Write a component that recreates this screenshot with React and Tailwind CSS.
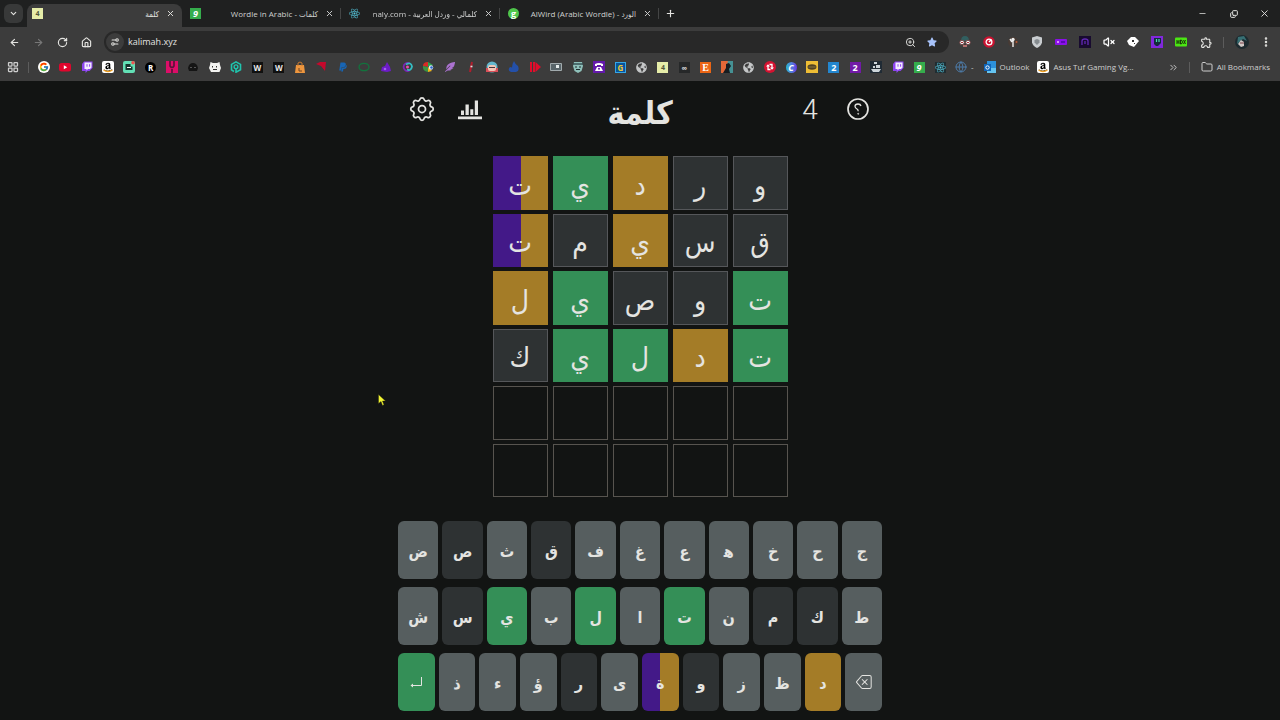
import { clsx } from "clsx";
import { BsBackspace } from "react-icons/bs";
import { FcGoogle } from "react-icons/fc";
import { FaAmazon, FaFeatherAlt, FaGlobeAmericas, FaPaypal, FaReact, FaStar } from "react-icons/fa";
import { MdOutlineExtension } from "react-icons/md";
import {
  ArrowLeft,
  ArrowRight,
  ChevronDown,
  ChevronsRight,
  Copy,
  EllipsisVertical,
  Folder,
  Globe,
  House,
  LayoutGrid,
  Minus,
  Plus,
  RotateCw,
  Settings2,
  VolumeX,
  X,
  ZoomIn,
} from "lucide-react";

const tileColors = {
  hit: "border-[#348f57] bg-[#348f57]",
  near: "border-[#a47c27] bg-[#a47c27]",
  miss: "border-[#55575a] bg-[#2e3233]",
  split: "border-transparent bg-[linear-gradient(90deg,#431988_50%,#a47c27_50%)] bg-origin-border",
  empty: "border-[#57544f]",
};

const keyColors = {
  hit: "bg-[#348f57]",
  near: "bg-[#a47c27]",
  miss: "bg-[#2e3233]",
  split: "bg-[linear-gradient(90deg,#431988_50%,#a47c27_50%)]",
  idle: "bg-[#565e5f]",
};

const guesses = [
  { word: "ورديت", marks: ["miss", "miss", "near", "hit", "split"] },
  { word: "قسيمت", marks: ["miss", "miss", "near", "miss", "split"] },
  { word: "توصيل", marks: ["hit", "miss", "miss", "hit", "near"] },
  { word: "تدليك", marks: ["hit", "near", "hit", "hit", "miss"] },
  { word: "", marks: ["empty", "empty", "empty", "empty", "empty"] },
  { word: "", marks: ["empty", "empty", "empty", "empty", "empty"] },
];

const keyStates = {
  "ق": "miss",
  "ص": "miss",
  "ك": "miss",
  "م": "miss",
  "س": "miss",
  "و": "miss",
  "ر": "miss",
  "ت": "hit",
  "ل": "hit",
  "ي": "hit",
  "د": "near",
  "ة": "split",
};

const keyRows = ["جحخهعغفقثصض", "طكمنتالبيسش"];
const lastRow = "دظزوةىرؤءذ";

const tabs = [
  { icon: "four", title: "كلمة", active: true },
  { icon: "nine", title: "كلمات - Wordle in Arabic" },
  { icon: "react", title: "كلمالي - وردل العربية - naly.com", faded: true },
  { icon: "green", title: "الورد - AlWird (Arabic Wordle)" },
];

// small square with one character in it
const Letter = ({ children, className }) => (
  <span className={clsx("flex size-[11px] shrink-0 items-center justify-center leading-[11px] font-bold", className)}>
    {children}
  </span>
);

const Svg = ({ children }) => (
  <svg viewBox="0 0 12 12" className="size-3" aria-hidden="true">
    {children}
  </svg>
);

const TwitchIcon = () => (
  <Svg>
    <path d="M1 3 3 .5h8.500V7L8.500 10H6.500L4.500 12v-2H1z" fill="#8d44f0" />
    <path d="M3.500 1.500h7v5L9 8H7L5.500 9.500V8h-2z" fill="#f4edff" />
    <path d="M6 3.200v2.500M8.600 3.200v2.500" stroke="#8d44f0" />
  </Svg>
);

const AmazonIcon = () => (
  <span className="relative flex size-3 items-center justify-center rounded-xs bg-white text-black">
    <FaAmazon className="size-[10px]" />
    <svg viewBox="0 0 12 12" className="absolute inset-0">
      <path d="M1.500 9Q6 12 10.500 9" fill="none" stroke="#f0a020" strokeWidth="1.300" />
    </svg>
  </span>
);

const GlobeIcon = () => <FaGlobeAmericas className="size-[11px] text-[#c4c6c7]" />;

const siteIcons = {
  four: <Letter className="bg-[#e6eda9] text-[7px] text-[#53573a]">4</Letter>,
  nine: <Letter className="bg-[#35ad4c] text-[9px] text-white italic">9</Letter>,
  react: <FaReact className="size-[11px] shrink-0 text-[#55c6dc]" />,
  green: <Letter className="rounded-full bg-[#4fc64b] text-[9px] text-white">g</Letter>,
};

const bookmarks = [
  ["Google", <span className="rounded-full bg-white p-px"><FcGoogle className="size-[10px]" /></span>],
  ["YouTube", <Svg><rect y="2" width="12" height="8.500" rx="2.500" fill="#e0062d" /><path d="m4.800 4.200 3.400 2-3.400 2z" fill="#fff" /></Svg>],
  ["Twitch", <TwitchIcon />],
  ["Amazon", <AmazonIcon />],
  ["Bot", <Svg><rect width="12" height="12" rx="2" fill="#62e0b5" /><path d="M2.500 3h5v2.500h2V9h-7z" fill="#17362f" /><path d="M4 6.500h4" stroke="#fff" /><circle cx="10" cy="1.800" r="1.800" fill="#ef5350" /></Svg>],
  ["R", <Letter className="rounded-full bg-black text-[8px] text-white">R</Letter>],
  ["U", <Svg><path d="M0 0h12v12H0z" fill="#dc0e68" /><path d="M4 0v5q2 3 4 0V0M6 8v4" fill="none" stroke="#541438" strokeWidth="1.600" /></Svg>],
  ["Hat", <Svg><path d="M1 7Q2 2 6 2t5 5l-1 3H2z" fill="#151515" /><path d="M3 6.500h2m2 0h2" stroke="#555" /></Svg>],
  ["Ghost", <Svg><path d="m1.500 1 2.500 1h4l2.500-1L11 4l1 3-1.500 4H2L0 7l1-3z" fill="#f3f3f0" /><path d="M3.500 5v1.500M7.500 5v1.500M4 8.500h4" stroke="#333" /></Svg>],
  ["Hex", <Svg><path d="M4 10.500 1.500 8.800V3.400L6 .900l4.500 2.500v5.400L6 11.200V8" fill="none" stroke="#20c4ad" strokeWidth="1.600" /><circle cx="6" cy="5.800" r="1.900" fill="none" stroke="#20c4ad" strokeWidth="1.400" /></Svg>],
  ["W one", <Letter className="bg-[#101010] text-[8px] text-[#e8e8e8]">W</Letter>],
  ["W two", <Letter className="bg-[#101010] text-[8px] text-[#e8e8e8]">W</Letter>],
  ["Bag", <Svg><path d="M2 4h8l1 8H1z" fill="#ee963e" /><path d="M4 5V2q2-2 4 0v3" fill="none" stroke="#c67831" /><path d="M5 7v3h3" stroke="#6d4425" fill="none" /></Svg>],
  ["Wing", <Svg><path d="M1 3 5 1h6l-1 9-4-5z" fill="#c5082c" /></Svg>],
  ["PayPal", <FaPaypal className="size-[10px] text-[#1765b5]" />],
  ["Ring", <Svg><ellipse cx="6" cy="6" rx="5" ry="3.700" fill="none" stroke="#12733d" strokeWidth="1.300" /></Svg>],
  ["Bell", <Svg><path d="m7 1 3 5 1 4-4 1-6-1 1-4 3-1z" fill="#6c1cc7" /><circle cx="5" cy="8" r="1.300" fill="#a35cf4" /></Svg>],
  ["Orbit", <Svg><path d="M8.500 2.500a4 4 0 1 0 0 7" fill="none" stroke="#7d25b8" strokeWidth="1.800" /><path d="M5 3.500q5-3 6 2-1 5-5 3" fill="none" stroke="#35bdc4" strokeWidth="1.800" /><circle cx="6.500" cy="6" r="1.500" fill="#e94cae" /></Svg>],
  ["Wheel", <Svg><path d="M6 6 1 5q0-4 5-4z" fill="#d92a25" /><path d="M6 6V1l5 3z" fill="#2ba34b" /><path d="M6 6 1 5q-1 5 5 6z" fill="#3c9544" /><path d="M6 6v5l4-1z" fill="#edb51c" /><circle cx="9" cy="6.500" r="2.200" fill="#e7eefb" /><circle cx="9.500" cy="6.500" r="1.300" fill="#2961c7" /></Svg>],
  ["Feather", <FaFeatherAlt className="size-[10px] text-[#ab72d0]" />],
  ["Pen", <Svg><path d="M7 1 5 11" stroke="#b01d2d" strokeWidth="2" /><path d="M5.500 5.500h2" stroke="#ddd" strokeWidth="1.600" /></Svg>],
  ["Avatar", <Svg><circle cx="6" cy="6" r="5.500" fill="#62b6cc" /><path d="M0 7h12v4H0z" fill="#d84e58" /><rect x="2" y="4" width="8" height="6" rx="2" fill="#f0c5b5" /><path d="M3 6.500h6" stroke="#45343b" /></Svg>],
  ["Flame", <Svg><path d="M6 0q1 3 4 5 2 5-2 6H3Q-1 9 2 6l2 .500Q4 3 6 0" fill="#2450a9" /></Svg>],
  ["Play", <Svg><path d="M1 1h2v10H1zM4 1h2v10H4zM6.500 1 12 6l-5.500 5z" fill="#e10d2b" /></Svg>],
  ["Ticket", <Svg><path d="M.5 2.500h11v7H.500z" fill="#59656a" stroke="#a1aaad" /><path d="M6 4h3v3H6z" fill="#e7eded" /></Svg>],
  ["Mask", <Svg><path d="M2 1h8l1 4-1.500 5L6 12l-3.500-2L1 5z" fill="#8fc0ba" /><path d="M1 3h10" stroke="#283f43" strokeWidth="1.300" /><path d="M3 6h2m2 0h2M4 8.500h4" stroke="#1e2e30" /></Svg>],
  ["Phone", <Svg><path d="M0 0h12v12H0z" fill="#6319ab" /><path d="M2 5V3q4-2 8 0v2H8V4H4v1zM4 6h4l2 4H2z" fill="#fff" /><circle cx="6" cy="7.700" r="1" fill="#6319ab" /></Svg>],
  ["G", <Letter className="border border-[#35a6e7] bg-[#08549a] text-[8px] text-[#f1c934]">G</Letter>],
  ["Site", <GlobeIcon />],
  ["كلمة", siteIcons.four],
  ["Infinity", <Letter className="bg-[#262829] text-[8px] text-[#d3d3d3]">∞</Letter>],
  ["Etsy", <Letter className="bg-[#eb6514] font-['Liberation_Serif',serif] text-[10px] text-white">E</Letter>],
  ["Painting", <Svg><path d="M0 0h12v12H0z" fill="#459194" /><path d="M0 0h7L4 12H0z" fill="#e36838" /><path d="m5 3 3-1 2 3-2 3 1 4H2l3-5z" fill="#171c20" /></Svg>],
  ["Website", <GlobeIcon />],
  ["Sync", <Svg><circle cx="6" cy="6" r="6" fill="#d51231" /><path d="M6.500 8.500H4v-4M5.500 3.500H8v4" fill="none" stroke="#fff" strokeWidth="1.300" /><path d="m2 5.500 2-2.300 2 2.300zM6 6.500l2 2.300 2-2.300z" fill="#fff" /></Svg>],
  ["Canva", <Letter className="rounded-full bg-linear-to-r from-[#18b7cf] to-[#652de6] text-[9px] text-white italic">C</Letter>],
  ["Oval", <Svg><path d="M0 0h12v12H0z" fill="#eebd35" /><ellipse cx="6" cy="6" rx="4.500" ry="2.700" fill="#514222" /><path d="M2.500 6h7" stroke="#8b753c" /></Svg>],
  ["Two blue", <Letter className="bg-[#2386cf] text-[9px] text-white">2</Letter>],
  ["Two purple", <Letter className="bg-[#721aa7] text-[9px] text-white">2</Letter>],
  ["Ship", <Svg><path d="M0 0h12v12H0z" fill="#202b35" /><path d="M1 8h10L9 11H3zM6 4h4v3H6zM3 5h2v2H3zM4 1h3v2H4z" fill="#cdd5da" /></Svg>],
  ["Twitch two", <TwitchIcon />],
  ["كلمات", siteIcons.nine],
  ["React", <span className="bg-[#202d32]">{siteIcons.react}</span>],
];

const extensions = [
  ["Glasses", <Svg><path d="M2 5q0-5 4-5t4 5z" fill="#315f60" /><circle cx="3" cy="6.500" r="2.300" fill="#eee" stroke="#6c4042" /><circle cx="9" cy="6.500" r="2.300" fill="#eee" stroke="#6c4042" /><path d="M2 6.500h2m4 0h2" stroke="#a92c32" /><path d="M4 10h4" stroke="#db7f7d" strokeWidth="1.500" /></Svg>],
  ["Blocker", <Svg><circle cx="6" cy="6" r="5.800" fill="#cc1230" /><circle cx="6" cy="6" r="2.900" fill="none" stroke="#fff" strokeWidth="1.300" /><path d="m6 6 2.500-2.500" stroke="#fff" strokeWidth="1.500" /></Svg>],
  ["Key", <Svg><circle cx="6" cy="6" r="5" fill="#473b35" /><circle cx="6" cy="3.500" r="1.700" fill="#eee" /><path d="M6 4v7M3 3l2 3" stroke="#eee" strokeWidth="1.400" /><circle cx="9.500" cy="6" r="1" fill="#b85a35" /></Svg>],
  ["Shield", <Svg><path d="m6 0 5 1.500v5Q10 10 6 12 2 10 1 6.500v-5z" fill="#c9cdd0" /><path d="m6 3 2.500 1v2.500L6 9 3.500 6.500V4z" fill="#858b8f" /></Svg>],
  ["Toggle", <Svg><rect y="3" width="12" height="6" rx="1" fill="#8a10e8" /><circle cx="3" cy="6" r="1" fill="#efb9ff" /><path d="M6 6h4" stroke="#5b06b6" strokeWidth="2" /></Svg>],
  ["Arch", <Svg><path d="M0 0h12v12H0z" fill="#180b2f" /><path d="M3 9V5q0-2 3-2t3 2v4M6 5v3" fill="none" stroke="#6229b5" strokeWidth="1.300" /></Svg>],
  ["Mute", <VolumeX className="size-3 text-white" strokeWidth={2.5} />],
  ["Cube", <Svg><path d="M0 5 4 1l4 0 4 4-5 6-5-2z" fill="#fff" /><path d="M5 4h2v2H5zM7 7h1v1H7z" fill="#333" /></Svg>],
  ["Stream", <Svg><path d="M0 0h12v12H0z" fill="#8128dc" /><path d="M3 2h7v5L7 10H5L3 8z" fill="#142b3d" /><path d="M5.500 3v3M8 3v3" stroke="#4edab1" strokeWidth="1.200" /></Svg>],
  ["HDX", <Svg><rect y="1.500" width="12" height="9" rx="1" fill="#4be613" /><path d="M2 4v4m2-4v4M2 6h2m1.500-2v4q2 0 2-2t-2-2M8.500 4l2 4m0-4-2 4" fill="none" stroke="#173709" /></Svg>],
];

const IconButton = ({ label, className, children }) => (
  <button type="button" aria-label={label} className={clsx("flex shrink-0 items-center justify-center", className)}>
    {children}
  </button>
);

const TabStrip = () => (
  <div className="flex h-[27px] items-end bg-[#1f2020]">
    <IconButton label="Search tabs" className="mb-1 ml-1 size-[19px] rounded-md bg-[#383939]">
      <ChevronDown className="size-[9px]" strokeWidth={3} />
    </IconButton>
    <div role="tablist" className="flex min-w-0">
      {tabs.map((tab) => (
        <div
          key={tab.title}
          className={clsx(
            "flex h-[23px] items-center pb-1",
            tab.active ? "ml-1 w-[155px] rounded-t-lg bg-[#3c3c3c] pl-[5px]" : "w-[159px] pl-2 text-[#d0d1d1]"
          )}
        >
          <button type="button" role="tab" aria-selected={!!tab.active} className="flex min-w-0 flex-1 items-center gap-1">
            {siteIcons[tab.icon]}
            <span
              dir="rtl"
              className={clsx("flex-1 text-start whitespace-nowrap", tab.faded && "mask-l-from-90%")}
            >
              {tab.title}
            </span>
          </button>
          <IconButton label="Close tab" className="w-[22px]">
            <X className="size-[9px]" strokeWidth={2.5} />
          </IconButton>
          <span className={clsx("h-[11px] w-px", !tab.active && "bg-[#444545]")} />
        </div>
      ))}
    </div>
    <IconButton label="New tab" className="mb-1 ml-[2px] size-[19px]">
      <Plus className="size-[11px]" strokeWidth={2.5} />
    </IconButton>
    <div className="mb-1 ml-auto flex h-[19px] items-center">
      <IconButton label="Minimize" className="w-[31px]"><Minus className="size-[9px]" /></IconButton>
      <IconButton label="Restore" className="w-[31px]"><Copy className="size-2 -scale-x-100 rotate-180" strokeWidth={3} /></IconButton>
      <IconButton label="Close" className="w-[31px]"><X className="size-[11px]" /></IconButton>
    </div>
  </div>
);

const Toolbar = () => (
  <div className="flex h-[30px] items-center pr-1 pl-[2px]">
    <IconButton label="Back" className="w-6"><ArrowLeft className="size-[11px]" strokeWidth={2.5} /></IconButton>
    <IconButton label="Forward" className="w-6 text-[#777]"><ArrowRight className="size-[11px]" strokeWidth={2.5} /></IconButton>
    <IconButton label="Reload" className="w-6"><RotateCw className="size-[11px]" strokeWidth={2.5} /></IconButton>
    <IconButton label="Home" className="w-6"><House className="size-[11px]" strokeWidth={2.5} /></IconButton>
    <div className="ml-[6px] flex h-[22px] flex-1 items-center rounded-full bg-[#282828] px-[2px]">
      <IconButton label="Site information" className="size-[18px] rounded-full bg-[#3c3c3c]">
        <Settings2 className="size-[10px] -scale-y-100" strokeWidth={2.5} />
      </IconButton>
      <input
        aria-label="Address"
        defaultValue="kalimah.xyz"
        className="min-w-0 flex-1 bg-transparent pl-1 text-[9px] outline-none"
      />
      <IconButton label="Zoom" className="w-[22px]"><ZoomIn className="size-[11px]" /></IconButton>
      <IconButton label="Bookmark" className="mr-1 w-[22px] text-[#a8c3fa]"><FaStar className="size-[10px]" /></IconButton>
    </div>
    <div className="ml-1 flex items-center">
      {extensions.map(([name, icon]) => (
        <IconButton key={name} label={name} className="w-6">{icon}</IconButton>
      ))}
      <IconButton label="Extensions" className="w-[26px]"><MdOutlineExtension className="size-[13px]" /></IconButton>
      <span className="mx-1 h-[11px] w-px bg-[#5c5c5c]" />
      <IconButton label="Profile" className="w-7">
        <svg viewBox="0 0 14 14" className="size-[14px]">
          <circle cx="7" cy="7" r="7" fill="#1d2b30" />
          <path d="m3 2 6-1 3 5-4-2-6 5Z" fill="#376f73" />
          <path d="m6 5 3 2v4l-3 1-3-3z" fill="#cfc8c6" />
          <path d="M5 8h4" stroke="#764049" />
        </svg>
      </IconButton>
      <IconButton label="Menu" className="w-5"><EllipsisVertical className="size-3" strokeWidth={3} /></IconButton>
    </div>
  </div>
);

const BookmarksBar = () => (
  <nav className="flex h-6 items-center pr-[10px] pb-1 pl-[7px] whitespace-nowrap text-[#cfcfcf]">
    <IconButton label="Apps" className="w-3"><LayoutGrid className="size-3" strokeWidth={2.5} /></IconButton>
    <span className="mx-[9px] h-[11px] w-px bg-[#5c5c5c]" />
    <div className="flex w-[909px] items-center justify-between">
      {bookmarks.map(([name, icon]) => (
        <a key={name} href="#" aria-label={name} className="flex w-3 items-center justify-center">
          {icon}
        </a>
      ))}
    </div>
    <a href="#" className="ml-2 flex items-center gap-1"><Globe className="size-3 text-[#4d7ba8]" /> -</a>
    <a href="#" className="ml-[10px] flex items-center gap-1">
      <Svg><path d="M3 0h9v12H3z" fill="#2c91dc" /><path d="M3 7h9v5H3z" fill="#65c4f0" /><path d="M0 3h7v7H0z" fill="#0f65b9" /><circle cx="3.500" cy="6.500" r="1.700" fill="none" stroke="#fff" /></Svg>
      Outlook
    </a>
    <a href="#" className="ml-2 flex items-center gap-1"><AmazonIcon /> Asus Tuf Gaming Vg...</a>
    <IconButton label="More bookmarks" className="ml-auto w-3"><ChevronsRight className="size-[11px]" /></IconButton>
    <span className="mx-[9px] h-[11px] w-px bg-[#5c5c5c]" />
    <a href="#" className="ml-[2px] flex items-center gap-1"><Folder className="size-3" /> All Bookmarks</a>
  </nav>
);

const GameHeader = () => (
  <header className="mx-auto flex h-14 w-full max-w-[484px] items-center justify-between">
    <div className="flex">
      <IconButton label="Settings" className="w-12">
        <svg viewBox="0 0 24 24" className="size-[30px]" fill="none" stroke="currentColor" strokeWidth="1.400">
          <path d="M10.325 4.317c.426-1.756 2.924-1.756 3.350 0a1.724 1.724 0 0 0 2.573 1.066c1.543-.940 3.310.826 2.370 2.370a1.724 1.724 0 0 0 1.065 2.572c1.756.426 1.756 2.924 0 3.350a1.724 1.724 0 0 0-1.066 2.573c.940 1.543-.826 3.310-2.370 2.370a1.724 1.724 0 0 0-2.572 1.065c-.426 1.756-2.924 1.756-3.350 0a1.724 1.724 0 0 0-2.573-1.066c-1.543.940-3.310-.826-2.370-2.370a1.724 1.724 0 0 0-1.065-2.572c-1.756-.426-1.756-2.924 0-3.350a1.724 1.724 0 0 0 1.066-2.573c-.940-1.543.826-3.310 2.370-2.370.996.608 2.296.070 2.572-1.065z" />
          <circle cx="12" cy="12" r="2.800" />
        </svg>
      </IconButton>
      <IconButton label="Statistics" className="w-12">
        <svg viewBox="0 0 24 24" className="size-6" fill="currentColor">
          <path d="M0 19.500h24v2.800H0zM3 13.500h3v4.500H3zM7.500 7.500h3.300V18H7.500zM12.300 12.300h3V18h-3zM16.800 3.500H20V18h-3.200z" />
        </svg>
      </IconButton>
    </div>
    <h1 className="pt-2 font-['DejaVu_Sans_Condensed','DejaVu_Sans',sans-serif] text-[32px] leading-10 font-bold">كلمة</h1>
    <div className="flex items-center">
      <span className="w-12 pt-0.5 text-center font-[Roboto,sans-serif] text-[28px] leading-10 font-light">4</span>
      <IconButton label="Help" className="w-12">
        <svg viewBox="0 0 24 24" className="size-6" fill="none" stroke="currentColor">
          <circle cx="12" cy="12" r="10" strokeWidth="1.700" />
          <path d="M15 9q-.500-2-3-2-3 0-3 2.300Q9 11 11 12q1.200.600 1.200 2.300" strokeWidth="1.300" />
          <circle cx="12.200" cy="16.800" r=".5" />
        </svg>
      </IconButton>
    </div>
  </header>
);

const Board = () => (
  <div className="mx-auto mt-[19px] grid h-[341px] w-[295px] grid-cols-5 grid-rows-6 gap-x-[5px] gap-y-1" dir="rtl">
    {guesses.map((guess, row) =>
      guess.marks.map((mark, col) => (
        <div
          key={`${row}-${col}`}
          className={clsx("flex items-center justify-center border pt-0.5 text-[28px] leading-9", tileColors[mark])}
        >
          {guess.word[col]}
        </div>
      ))
    )}
  </div>
);

const Key = ({ state = "idle", label, children }) => (
  <button
    type="button"
    aria-label={label}
    className={clsx("flex h-[58px] flex-1 items-center justify-center rounded-md", !label && "pt-1", keyColors[state])}
  >
    {children}
  </button>
);

// heh is drawn in its joining form, as on a printed keyboard
const keyText = (letter) => (letter === "ه" ? "ه\u200D" : letter);

const Keyboard = () => (
  <div
    dir="rtl"
    className="mx-auto mt-6 flex w-full max-w-[484px] flex-col gap-2 font-['DejaVu_Sans_Condensed','DejaVu_Sans',sans-serif] text-base font-bold"
  >
    {keyRows.map((letters) => (
      <div key={letters} className="flex gap-1">
        {[...letters].map((letter) => (
          <Key key={letter} state={keyStates[letter]}>{keyText(letter)}</Key>
        ))}
      </div>
    ))}
    <div className="flex gap-1">
      <Key label="Backspace"><BsBackspace className="size-4" /></Key>
      {[...lastRow].map((letter) => (
        <Key key={letter} state={keyStates[letter]}>{letter}</Key>
      ))}
      <Key label="Enter" state="hit">
        <svg viewBox="0 0 12 12" className="size-3" fill="none" stroke="currentColor">
          <path d="M11.500 1v8.500H2" />
          <path d="M3 7.500v4L.500 9.500z" fill="currentColor" stroke="none" />
        </svg>
      </Key>
    </div>
  </div>
);

const App = () => {
  return (
    <div className="min-h-screen bg-[#121413] font-['Open_Sans','DejaVu_Sans_Condensed','DejaVu_Sans',sans-serif] text-[#e4e4e1]">
      <div className="bg-[#3c3c3c] text-[8px] leading-3">
        <TabStrip />
        <Toolbar />
        <BookmarksBar />
      </div>
      <main className="pb-2">
        <GameHeader />
        <Board />
        <Keyboard />
      </main>
      {/* mouse pointer */}
      <svg viewBox="0 0 8 12" className="pointer-events-none absolute top-[394px] left-[378px] h-3 w-2">
        <path d="M.5.500v9L3 7.500l1.500 4 1.500-.700L4.500 7H7.500z" fill="#f2f532" stroke="#20210c" strokeWidth=".4" />
      </svg>
    </div>
  );
};

export default App;
